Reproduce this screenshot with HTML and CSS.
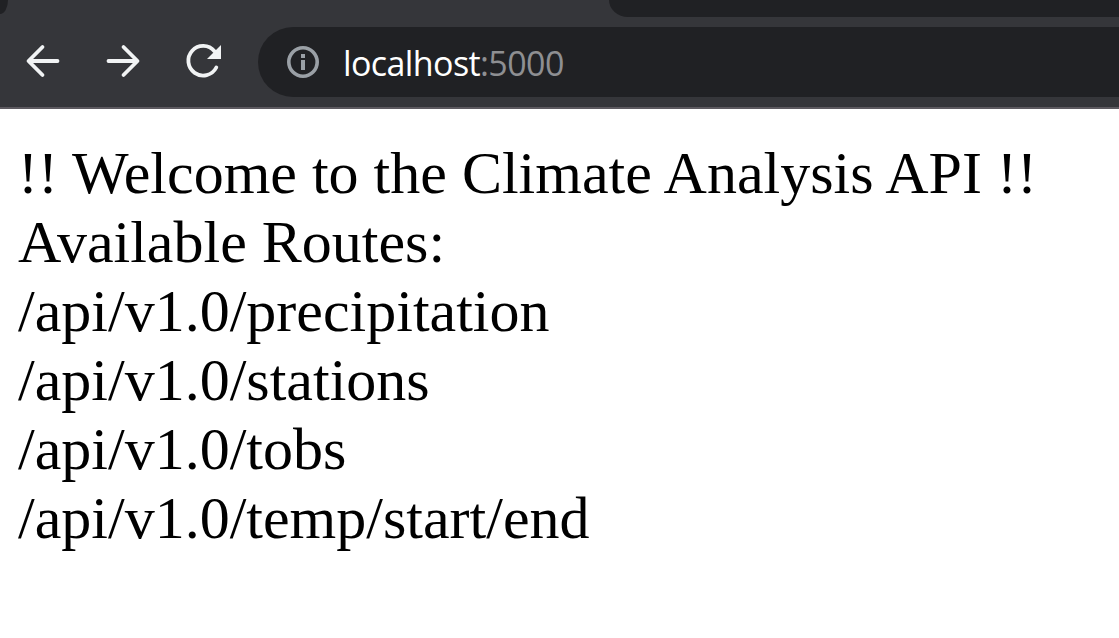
FILE: index.html
```html
<!DOCTYPE html>
<html lang="en">
<head>
<meta charset="utf-8">
<title>localhost:5000</title>
<link rel="stylesheet" href="styles.css">
</head>
<body>
<header class="browser">
  <div class="tabs"><div class="tab-edge"></div><div class="tab-gap"></div></div>
  <div class="toolbar">
    <svg class="nav" viewBox="0 0 240 80" aria-hidden="true">
      <g fill="none" stroke="#f1f3f4" stroke-width="3.8" stroke-linecap="round" stroke-linejoin="round">
        <path d="M57.500 34H29M42.500 20L28.500 34L42.500 48"/>
        <path d="M108.500 34H137M123.500 20L137.500 34L123.500 48"/>
        <path d="M214.500 24.200A14.800 14.800 0 1 0 216.300 40.500"/>
      </g>
      <path d="M221 18V32H207Z" fill="#f1f3f4"/>
    </svg>
    <div class="address">
      <svg class="info" viewBox="0 0 34 34" aria-hidden="true">
        <circle cx="17" cy="17" r="14.200" fill="none" stroke="#9aa0a6" stroke-width="3.600"/>
        <path d="M15 9h4v4h-4zM15 15h4v10h-4z" fill="#9aa0a6"/>
      </svg>
      <span class="url">localhost<span class="port">:5000</span></span>
    </div>
  </div>
</header>
<main class="page">
  <div>!! Welcome to the Climate Analysis API !!</div>
  <div>Available Routes:</div>
  <div>/api/v1.0/precipitation</div>
  <div>/api/v1.0/stations</div>
  <div>/api/v1.0/tobs</div>
  <div>/api/v1.0/temp/start/end</div>
</main>
</body>
</html>
```
FILE: styles.css
```css
body { margin: 0; background: #fff; overflow: hidden; }
.browser { height: 109px; box-sizing: border-box; background: #35363a; border-bottom: 2px solid #5d5a60; }
.tabs { height: 17px; display: flex; justify-content: space-between; }
.tab-edge { width: 8px; height: 14px; background: #202124; border-bottom-right-radius: 8px 14px; }
.tab-gap { width: 510px; background: #202124; border-bottom-left-radius: 19px 17px; }
.toolbar { display: flex; padding-top: 10px; }
.nav { width: 240px; height: 80px; margin-right: 18px; flex: none; }
.address { flex: 1; height: 70px; display: flex; align-items: center; background: #202124; border-radius: 35px 0 0 35px; padding-left: 28px; }
.info { width: 34px; height: 34px; margin-right: 23px; }
.url { font: 34px/46px "Open Sans", sans-serif; letter-spacing: -0.6px; padding-top: 1px; color: #fff; white-space: nowrap; }
.port { color: #8e8f92; }
.page { padding: 30px 18px; font: 60px/69px "Liberation Serif", serif; color: #000; white-space: nowrap; }
```
